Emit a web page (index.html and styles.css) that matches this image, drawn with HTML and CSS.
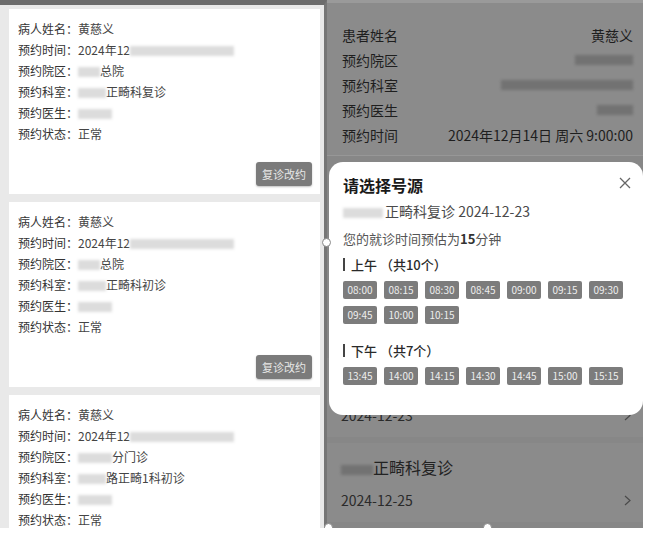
FILE: index.html
```html
<!DOCTYPE html>
<html lang="zh-CN">
<head>
    <meta charset="UTF-8">
    <meta name="viewport" content="width=device-width, initial-scale=1.0">
    <title>预约改约</title>
    <link rel="stylesheet" href="styles.css">
</head>
<body>
<div class="frame">
    <!-- left: appointment list -->
    <div class="left">
        <div class="card">
            <div class="row"><span class="label">病人姓名：</span>黄慈义</div>
            <div class="row"><span class="label">预约时间：</span>2024年12<span class="blur w104"></span></div>
            <div class="row"><span class="label">预约院区：</span><span class="blur w22"></span>总院</div>
            <div class="row"><span class="label">预约科室：</span><span class="blur w28"></span>正畸科复诊</div>
            <div class="row"><span class="label">预约医生：</span><span class="blur w34"></span></div>
            <div class="row"><span class="label">预约状态：</span>正常</div>
            <div class="actions"><button class="btn">复诊改约</button></div>
        </div>
        <div class="card">
            <div class="row"><span class="label">病人姓名：</span>黄慈义</div>
            <div class="row"><span class="label">预约时间：</span>2024年12<span class="blur w104"></span></div>
            <div class="row"><span class="label">预约院区：</span><span class="blur w22"></span>总院</div>
            <div class="row"><span class="label">预约科室：</span><span class="blur w28"></span>正畸科初诊</div>
            <div class="row"><span class="label">预约医生：</span><span class="blur w34"></span></div>
            <div class="row"><span class="label">预约状态：</span>正常</div>
            <div class="actions"><button class="btn">复诊改约</button></div>
        </div>
        <div class="card">
            <div class="row"><span class="label">病人姓名：</span>黄慈义</div>
            <div class="row"><span class="label">预约时间：</span>2024年12<span class="blur w104"></span></div>
            <div class="row"><span class="label">预约院区：</span><span class="blur w34"></span>分门诊</div>
            <div class="row"><span class="label">预约科室：</span><span class="blur w28"></span>路正畸1科初诊</div>
            <div class="row"><span class="label">预约医生：</span><span class="blur w34"></span></div>
            <div class="row"><span class="label">预约状态：</span>正常</div>
        </div>
    </div>

    <!-- right: reschedule page with time picker -->
    <div class="right">
        <div class="info">
            <div class="info-row"><span>患者姓名</span><span>黄慈义</span></div>
            <div class="info-row"><span>预约院区</span><span class="blur dark w58"></span></div>
            <div class="info-row"><span>预约科室</span><span class="blur dark w132"></span></div>
            <div class="info-row"><span>预约医生</span><span class="blur dark w36"></span></div>
            <div class="info-row"><span>预约时间</span><span>2024年12月14日 周六 9:00:00</span></div>
        </div>
        <div class="list">
            <div class="item covered">
                <div class="item-title"><span class="blur dark w32"></span>正畸科复诊</div>
                <div class="item-date">2024-12-23
                    <svg class="chev" width="7" height="11" viewBox="0 0 7 11"><polyline points="1,1 6,5.5 1,10" fill="none" stroke="#4a4a4a" stroke-width="1.2"/></svg>
                </div>
            </div>
            <div class="item">
                <div class="item-title"><span class="blur dark w32"></span>正畸科复诊</div>
                <div class="item-date">2024-12-25
                    <svg class="chev" width="7" height="11" viewBox="0 0 7 11"><polyline points="1,1 6,5.5 1,10" fill="none" stroke="#4a4a4a" stroke-width="1.2"/></svg>
                </div>
            </div>
        </div>

        <div class="modal">
            <div class="modal-head">
                <span class="modal-title">请选择号源</span>
                <svg class="close" width="12" height="12" viewBox="0 0 12 12"><path d="M1 1L11 11M11 1L1 11" stroke="#666" stroke-width="1.3"/></svg>
            </div>
            <div class="sub"><span class="blur w40"></span>正畸科复诊 2024-12-23</div>
            <div class="estimate">您的就诊时间预估为<b>15</b>分钟</div>
            <div class="period">上午 （共10个）</div>
            <div class="slots">
                <span class="slot">08:00</span><span class="slot">08:15</span><span class="slot">08:30</span><span class="slot">08:45</span>
                <span class="slot">09:00</span><span class="slot">09:15</span><span class="slot">09:30</span><span class="slot">09:45</span>
                <span class="slot">10:00</span><span class="slot">10:15</span>
            </div>
            <div class="period pm">下午 （共7个）</div>
            <div class="slots">
                <span class="slot">13:45</span><span class="slot">14:00</span><span class="slot">14:15</span><span class="slot">14:30</span>
                <span class="slot">14:45</span><span class="slot">15:00</span><span class="slot">15:15</span>
            </div>
        </div>
    </div>

    <span class="handle h-mid"></span>
    <span class="handle h-bl"></span>
    <span class="handle h-bm"></span>
</div>
</body>
</html>
```

FILE: styles.css
```css
body {
    margin: 0;
    background: #fff;
    font-family: "Noto Sans CJK SC", "Noto Sans", sans-serif;
}
.frame {
    position: relative;
    display: flex;
    width: 643px;
    height: 528px;
    overflow: hidden;
}

/* left panel */
.left {
    width: 315px;
    padding: 4px 0 0 9px;
    background: #e9e9e9;
    border-top: 5px solid #6c6c6c;
    border-right: 3px solid #767676;
    overflow: hidden;
}
.card {
    width: 294px;
    padding: 9px 8px 8px 9px;
    margin-bottom: 8px;
    background: #fff;
}
.row {
    font-size: 12px;
    line-height: 21px;
    height: 21px;
    color: #444;
    white-space: nowrap;
}
.label {
    color: #333;
}
.actions {
    display: flex;
    justify-content: flex-end;
    margin-top: 18px;
}
.btn {
    width: 56px;
    height: 24px;
    padding: 0;
    border: none;
    border-radius: 3px;
    background: #7b7b7b;
    color: #e8e8e8;
    font-family: inherit;
    font-size: 11px;
    box-shadow: 0 1px 2px rgba(0,0,0,0.25);
}

.blur {
    display: inline-block;
    height: 10px;
    vertical-align: -1px;
    background: #dcdcdc;
    filter: blur(1.5px);
}
.blur.dark {
    background: #727272;
}
.w22 { width: 22px; }
.w28 { width: 28px; }
.w32 { width: 32px; }
.w34 { width: 34px; }
.w36 { width: 36px; }
.w40 { width: 40px; }
.w58 { width: 58px; }
.w104 { width: 104px; }
.w132 { width: 132px; }

/* right panel */
.right {
    position: relative;
    width: 316px;
    background: #878787;
    border-top: 3px solid #9a9a9a;
}
.info {
    padding: 19px 10px 8px 15px;
    background: #8b8b8b;
    border-bottom: 1px solid #979797;
}
.info-row {
    display: flex;
    justify-content: space-between;
    align-items: center;
    height: 25px;
    font-size: 14px;
    color: #1e1e1e;
}
.list {
    margin-top: 202px;
}
.item {
    padding: 8px 12px 5px 14px;
    margin-bottom: 6px;
    background: #8b8b8b;
}
/* title of the first item sits fully under the sheet */
.item.covered .item-title {
    visibility: hidden;
}
.item-title {
    font-size: 16px;
    line-height: 32px;
    color: #222;
}
.item-date {
    display: flex;
    justify-content: space-between;
    align-items: center;
    font-size: 14px;
    line-height: 34px;
    color: #2a2a2a;
}

/* time picker sheet */
.modal {
    position: absolute;
    left: 2px;
    right: 0;
    top: 159px;
    height: 241px;
    padding: 12px 0 0 14px;
    background: #fff;
    border-radius: 14px;
}
.modal-head {
    display: flex;
    justify-content: space-between;
    align-items: center;
    padding-right: 12px;
}
.modal-title {
    font-size: 16px;
    line-height: 22px;
    font-weight: bold;
    color: #1a1a1a;
}
.close {
    margin-top: -5px;
}
.sub {
    font-size: 14px;
    line-height: 27px;
    color: #4a4a4a;
    margin-top: 2px;
}
.sub .blur {
    margin-right: 2px;
}
.estimate {
    font-size: 13px;
    line-height: 27px;
    color: #555;
}
.estimate b {
    color: #333;
}
.period {
    font-size: 13px;
    font-weight: 500;
    color: #2a2a2a;
    padding-left: 6px;
    border-left: 2px solid #444;
    line-height: 13px;
    margin: 6px 0 10px;
}
.period.pm {
    margin-top: 20px;
}
.slots {
    display: grid;
    grid-template-columns: repeat(7, 34px);
    gap: 7px;
}
.slot {
    height: 18px;
    line-height: 18px;
    text-align: center;
    font-size: 10px;
    color: #eee;
    background: #7c7c7c;
    border-radius: 2px;
}

/* editor handles from the screenshot */
.handle {
    position: absolute;
    width: 7px;
    height: 7px;
    border: 1px solid #888;
    border-radius: 50%;
    background: #fff;
}
.h-mid { left: 322px; top: 238px; }
.h-bl { left: 324px; top: 523px; }
.h-bm { left: 483px; top: 523px; }
```
